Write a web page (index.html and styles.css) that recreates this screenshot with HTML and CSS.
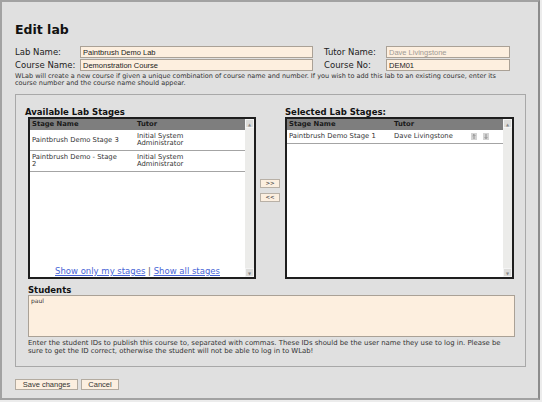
FILE: index.html
```html
<!DOCTYPE html>
<html>
<head>
    <link rel="stylesheet" href="styles.css">
</head>
<body>
    <div class="page">
        <h1>Edit lab</h1>
        <div class="fields">
            <label>Lab Name:</label>
            <input class="field" type="text" value="Paintbrush Demo Lab">
            <label class="second">Tutor Name:</label>
            <input class="field muted" type="text" value="Dave Livingstone" readonly>
            <label>Course Name:</label>
            <input class="field" type="text" value="Demonstration Course">
            <label class="second">Course No:</label>
            <input class="field" type="text" value="DEM01">
        </div>
        <p class="hint">WLab will create a new course if given a unique combination of course name and number. If you wish to add this lab to an existing course, enter its course number and the course name should appear.</p>

        <div class="stages-box">
            <div class="stages">
                <div class="stage-col">
                    <h3 class="pull">Available Lab Stages</h3>
                    <div class="list">
                        <div class="list-main">
                            <table class="stage-table">
                                <tr><th class="name-col">Stage Name</th><th class="tutor-col">Tutor</th><th></th></tr>
                                <tr><td>Paintbrush Demo Stage 3</td><td>Initial System Administrator</td><td></td></tr>
                                <tr><td>Paintbrush Demo - Stage 2</td><td>Initial System Administrator</td><td></td></tr>
                            </table>
                            <div class="filters">
                                <a href="#">Show only my stages</a> | <a href="#">Show all stages</a>
                            </div>
                        </div>
                        <div class="scroll">
                            <span class="scroll-btn">&#9650;</span>
                            <span class="scroll-btn">&#9660;</span>
                        </div>
                    </div>
                </div>

                <div class="mover">
                    <button class="move">&gt;&gt;</button>
                    <button class="move">&lt;&lt;</button>
                </div>

                <div class="stage-col">
                    <h3>Selected Lab Stages:</h3>
                    <div class="list">
                        <div class="list-main">
                            <table class="stage-table">
                                <tr><th class="name-col">Stage Name</th><th class="tutor-col">Tutor</th><th></th></tr>
                                <tr class="short">
                                    <td>Paintbrush Demo Stage 1</td>
                                    <td>Dave Livingstone</td>
                                    <td class="order">
                                        <span class="order-btn"><svg width="4" height="5" viewBox="0 0 4 5"><path d="M2 0.5 L2 5 M0.7 1.8 L2 0.5 L3.3 1.8" stroke="#777" fill="none" stroke-width="0.7"/></svg></span>
                                        <span class="order-btn"><svg width="4" height="5" viewBox="0 0 4 5"><path d="M2 0 L2 4.5 M0.7 3.2 L2 4.5 L3.3 3.2" stroke="#777" fill="none" stroke-width="0.7"/></svg></span>
                                    </td>
                                </tr>
                            </table>
                        </div>
                        <div class="scroll">
                            <span class="scroll-btn">&#9650;</span>
                            <span class="scroll-btn">&#9660;</span>
                        </div>
                    </div>
                </div>
            </div>

            <h3 class="students-title">Students</h3>
            <textarea class="students">paul</textarea>
            <p class="hint">Enter the student IDs to publish this course to, separated with commas. These IDs should be the user name they use to log in. Please be sure to get the ID correct, otherwise the student will not be able to log in to WLab!</p>
        </div>

        <div class="actions">
            <button class="btn">Save changes</button>
            <button class="btn">Cancel</button>
        </div>
    </div>
</body>
</html>
```

FILE: styles.css
```css
body {
    margin: 0;
    background: #ececec;
    font-family: "DejaVu Sans", Verdana, sans-serif;
    color: #222;
}
.page {
    width: 523px;
    height: 396px;
    padding: 0 0 0 13px;
    border: 2px solid #a2a2a2;
    border-right-color: #8c8c8c;
    background: #e0e0e0;
}
h1 {
    margin: 20px 0 9px 0;
    font-size: 12.5px;
    line-height: 15px;
    font-weight: bold;
    color: #111;
}
.fields {
    display: grid;
    grid-template-columns: 65px 233px 73px 124px;
    grid-auto-rows: 12px;
    row-gap: 1px;
    align-items: center;
}
.fields label {
    font-size: 8.5px;
    line-height: 10px;
    color: #222;
}
.fields label.second {
    padding-left: 11px;
}
.field {
    box-sizing: border-box;
    height: 12px;
    margin: 0;
    padding: 0 2px;
    border: 1px solid #aaa196;
    background: #fdefdf;
    font-family: "Liberation Sans", Arial, sans-serif;
    font-size: 7.5px;
    color: #222;
    outline: none;
}
.field.muted {
    color: #a09a94;
}
.hint {
    margin: 2px 0 0 0;
    font-size: 6.5px;
    line-height: 7px;
    color: #333;
    width: 500px;
}
.stages-box {
    box-sizing: border-box;
    width: 511px;
    height: 273px;
    margin-top: 7px;
    padding: 12px 0 0 12px;
    border: 1px solid #a8a8a8;
}
h3 {
    margin: 0;
    font-size: 8.5px;
    line-height: 10px;
    font-weight: bold;
    color: #111;
}
h3.pull {
    margin-left: -3px;
}
.stages {
    display: flex;
}
.list {
    box-sizing: border-box;
    display: flex;
    height: 162px;
    border: 2px solid #1e1e1e;
    background: #fff;
}
.stage-col:first-child .list {
    width: 228px;
}
.stage-col:last-child .list {
    width: 229px;
}
.list-main {
    flex: 1;
    display: flex;
    flex-direction: column;
}
.scroll {
    width: 9px;
    display: flex;
    flex-direction: column;
    justify-content: space-between;
    background: #ececea;
}
.scroll-btn {
    height: 9px;
    font-size: 4px;
    line-height: 9px;
    text-align: center;
    color: #888;
    background: #dcdcda;
    border: 1px solid #f4f4f4;
    box-sizing: border-box;
}
.stage-table {
    width: 100%;
    border-collapse: collapse;
    table-layout: fixed;
}
.stage-table th {
    height: 11px;
    padding: 0 0 0 2px;
    background: #7e7e7e;
    text-align: left;
    font-size: 6.8px;
    line-height: 7px;
    font-weight: bold;
    color: #1a1a1a;
}
.stage-table th.name-col {
    width: 103px;
}
.stage-table th.tutor-col {
    width: 75px;
}
.stage-table td {
    height: 20px;
    padding: 3px 0 3px 2px;
    font-size: 6.8px;
    line-height: 7px;
    color: #333;
    border-bottom: 1px solid #a4a4a4;
    box-sizing: border-box;
}
.stage-table td:first-child {
    padding-right: 12px;
}
.stage-table tr.short td {
    height: 13px;
    padding-top: 2px;
    padding-bottom: 2px;
}
.order {
    white-space: nowrap;
}
.order-btn {
    display: inline-block;
    width: 6px;
    height: 7px;
    margin-right: 4px;
    background: #d4d4d4;
    vertical-align: middle;
}
.order-btn svg {
    display: block;
    margin: 1px auto 0;
}
.filters {
    margin-top: auto;
    margin-bottom: 1px;
    text-align: center;
    font-size: 8.5px;
    line-height: 10px;
    color: #555;
}
.filters a {
    color: #4764d6;
}
.mover {
    width: 29px;
    display: flex;
    flex-direction: column;
    align-items: center;
    gap: 5px;
    padding-top: 72px;
}
.move {
    width: 20px;
    height: 9px;
    padding: 0;
    margin: 0 0 0 -1px;
    border: 1px solid #b8b0a6;
    background: #fcefe0;
    font-family: "DejaVu Sans", Verdana, sans-serif;
    font-size: 5.5px;
    line-height: 7px;
    color: #333;
}
.students-title {
    margin-top: 6px;
}
.students {
    display: block;
    box-sizing: border-box;
    width: 487px;
    height: 42px;
    margin: 0;
    padding: 1px 2px;
    border: 1px solid #aaa196;
    background: #fdefdf;
    font-family: "DejaVu Sans", Verdana, sans-serif;
    font-size: 6px;
    color: #333;
    resize: none;
}
.stages-box .hint {
    margin-top: 2px;
    font-size: 6.9px;
    line-height: 8px;
    width: 480px;
}
.actions {
    display: flex;
    gap: 3px;
    margin-top: 12px;
}
.btn {
    height: 11px;
    padding: 0 4px;
    border: 1px solid #b3aba0;
    background: #fcefe0;
    font-family: "Liberation Sans", Arial, sans-serif;
    font-size: 7.5px;
    line-height: 9px;
    color: #333;
}
.actions .btn:first-child {
    width: 63px;
}
.actions .btn:last-child {
    width: 38px;
}
```
